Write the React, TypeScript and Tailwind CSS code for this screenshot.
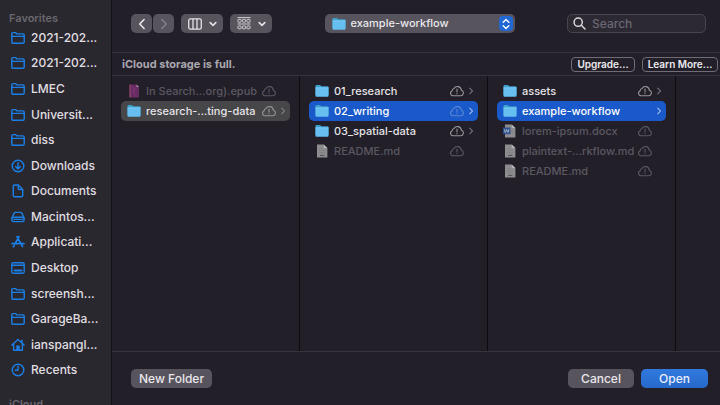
import type { ReactNode } from "react";

type IconName = "folder" | "download" | "document" | "disk" | "apps" | "desktop" | "home" | "clock";
type FileKind = "folder" | "epub" | "md" | "docx";
type Entry = { name: string; kind: FileKind; cloud?: boolean; state?: "active" | "path" };

const favorites: { label: string; icon: IconName }[] = [
  { label: "2021-202...", icon: "folder" },
  { label: "2021-202...", icon: "folder" },
  { label: "LMEC", icon: "folder" },
  { label: "Universit...", icon: "folder" },
  { label: "diss", icon: "folder" },
  { label: "Downloads", icon: "download" },
  { label: "Documents", icon: "document" },
  { label: "Macintos...", icon: "disk" },
  { label: "Applicati...", icon: "apps" },
  { label: "Desktop", icon: "desktop" },
  { label: "screensh...", icon: "folder" },
  { label: "GarageBa...", icon: "folder" },
  { label: "ianspangl...", icon: "home" },
  { label: "Recents", icon: "clock" },
];

const columns: Entry[][] = [
  [
    { name: "In Search...org).epub", kind: "epub", cloud: true },
    { name: "research-...ting-data", kind: "folder", cloud: true, state: "path" },
  ],
  [
    { name: "01_research", kind: "folder", cloud: true },
    { name: "02_writing", kind: "folder", cloud: true, state: "active" },
    { name: "03_spatial-data", kind: "folder", cloud: true },
    { name: "README.md", kind: "md", cloud: true },
  ],
  [
    { name: "assets", kind: "folder", cloud: true },
    { name: "example-workflow", kind: "folder", state: "active" },
    { name: "lorem-ipsum.docx", kind: "docx", cloud: true },
    { name: "plaintext-...rkflow.md", kind: "md", cloud: true },
    { name: "README.md", kind: "md", cloud: true },
  ],
];

const sidebarShapes: Record<IconName, ReactNode> = {
  folder: (
    <>
      <path d="M.8 11V2.9q0-1.3 1.3-1.3h2.5l1.3 1.3h6q1.3 0 1.3 1.3V11q0 1.3-1.3 1.3H2.1Q.8 12.3.8 11Z" />
      <path d="M.8 5.4h12.4" />
    </>
  ),
  download: (
    <>
      <circle cx="7" cy="7" r="5.8" />
      <path d="M7 3.8v6M4.6 7.6 7 10l2.4-2.4" />
    </>
  ),
  document: (
    <>
      <path d="M2.3 11.6V2.2q0-1.2 1.2-1.2h3.7l4.5 4.5v6.1q0 1.2-1.2 1.2h-7q-1.2 0-1.2-1.2Z" />
      <path d="M7.2 1.2v3.2q0 1.1 1.1 1.1h3.2" />
    </>
  ),
  disk: (
    <>
      <path d="M.9 8.3 3 3.4q.5-1 1.6-1h4.8q1.1 0 1.6 1l2.1 4.9" />
      <rect x=".9" y="7.2" width="12.2" height="4.4" rx="1.7" />
      <path d="M3 9.4h6M10.5 9.4h.8" />
    </>
  ),
  apps: (
    <g strokeWidth="1.7">
      <path d="m6 1.6 5.5 10M8 1.6 4.2 8.5M3.2 10.4l-.8 1.4M1 8.6h7.2M10.3 8.6H13" />
    </g>
  ),
  desktop: (
    <>
      <rect x=".8" y="1.8" width="12.4" height="10.4" rx="1.4" />
      <path d="M1 4.2h12" />
      <path d="M3.6 9.4h6.8" strokeWidth="2" />
    </>
  ),
  home: (
    <>
      <path d="M.9 7 7 1.5 13.1 7M2.6 6v6.2h8.8V6M11 2.2v2.4" />
      <path d="M5.3 7.5h3.4v4.7H5.3Z" fill="currentColor" stroke="none" />
    </>
  ),
  clock: (
    <>
      <circle cx="7" cy="7" r="5.8" />
      <path d="M7 3.3V7.3H4.2" />
    </>
  ),
};

function SidebarIcon({ name }: { name: IconName }) {
  return (
    <svg viewBox="0 0 14 14" className="size-3.5 shrink-0 text-[#1b7fe8]" fill="none" stroke="currentColor" strokeWidth="1.4" strokeLinecap="round" strokeLinejoin="round" aria-hidden="true">
      {sidebarShapes[name]}
    </svg>
  );
}

function FileIcon({ kind }: { kind: FileKind }) {
  if (kind === "folder") {
    return (
      <svg viewBox="0 0 14 14" className="size-3.5 shrink-0" aria-hidden="true">
        <path d="M.5 2q0-1 1-1h3.2q.6 0 1 .5l.6.7h6.2q1 0 1 1V11H.5Z" fill="#3d9fce" />
        <path d="M.5 3.6h13v8.2q0 .9-.9.9H1.4q-.9 0-.9-.9Z" fill="#66bff0" />
        <path d="M.5 3.6h13v.6H.5Z" fill="#8dd4f8" />
      </svg>
    );
  }
  if (kind === "epub") {
    return (
      <svg viewBox="0 0 14 14" className="size-3.5 shrink-0" aria-hidden="true">
        <path d="M2.5.5h7L12 3v10.5H2.5Z" fill="#672a62" />
        <path d="M2.5.5h1.3v13H2.5Z" fill="#8b4a66" />
        <path d="m5 2 2 3-1 4 3 3M9 3 7 7l3 3" stroke="#7f3c76" strokeWidth=".7" fill="none" />
        <path d="M9.5.5 12 3H9.5Z" fill="#a796a5" />
      </svg>
    );
  }
  return (
    <svg viewBox="0 0 14 14" className="size-3.5 shrink-0" aria-hidden="true">
      <path d="M2 .4h6.8L12.4 4v9.6H2Z" fill="#8d8c8e" />
      <path d="M8.8.4 12.4 4H8.8Z" fill="#b4b3b5" />
      <path d="M4 4.5h3.5M4 6.5h6.3M4 8.5h6.3" stroke="#7b7a7d" strokeWidth=".6" />
      {kind === "md" && <path d="M5 11.4h4.4" stroke="#59585c" strokeWidth="1.2" />}
      {kind === "docx" && (
        <>
          <path d="M0 3.5h7.4v6.7H0Z" fill="#2e518b" />
          <path d="m1.3 5.2 1 3.3 1.3-3 1.3 3 1-3.3" stroke="#a9b5cb" strokeWidth=".9" fill="none" />
        </>
      )}
    </svg>
  );
}

function CloudIcon({ tone }: { tone: string }) {
  return (
    <svg viewBox="0 0 14 12" className={`h-3 w-3.5 shrink-0 ${tone}`} fill="none" stroke="currentColor" strokeWidth="1.1" strokeLinecap="round" strokeLinejoin="round" aria-hidden="true">
      <path d="M3.3 10.7h7.3a2.8 2.8 0 0 0 .7-5.5A3.9 3.9 0 0 0 4 3.5 2.3 2.3 0 0 0 2.1 5.9 2.5 2.5 0 0 0 3.3 10.7Z" />
      <path d="M7 4v2.9M7 8.6v.1" />
    </svg>
  );
}

function Chevron({ tone, className = "h-2 w-1" }: { tone: string; className?: string }) {
  return (
    <svg viewBox="0 0 4 8" className={`shrink-0 ${className} ${tone}`} fill="none" stroke="currentColor" strokeLinecap="round" strokeLinejoin="round" aria-hidden="true">
      <path d="M.6 1 3.5 4 .6 7" />
    </svg>
  );
}

function DownChevron() {
  return (
    <svg viewBox="0 0 8 6" className="h-1.5 w-2" fill="none" stroke="#e4e2e6" strokeWidth="1.6" strokeLinecap="round" strokeLinejoin="round" aria-hidden="true">
      <path d="M1.2 1.6 4 4.3l2.8-2.7" />
    </svg>
  );
}

function FileRow({ entry }: { entry: Entry }) {
  const isFolder = entry.kind === "folder";
  const active = entry.state === "active";
  const background = active ? "bg-[#1a59c9]" : entry.state === "path" ? "bg-[#474648]" : "";
  const text = active ? "text-white" : isFolder ? "text-[#e6e4e8]" : "text-[#5b5861]";
  const cloud = active ? "text-[#5c87d2]" : isFolder ? "text-[#96949b]" : "text-[#5b5861]";
  return (
    <li>
      <button type="button" className={`flex h-5 w-full items-center gap-[5px] rounded-[5px] pr-[5px] pl-1.5 text-left text-[11px] ${background} ${text}`}>
        <FileIcon kind={entry.kind} />
        <span className="min-w-0 flex-1 whitespace-nowrap">{entry.name}</span>
        {entry.cloud && <CloudIcon tone={cloud} />}
        {isFolder ? <Chevron tone={active ? "text-[#dfe8f8]" : "text-[#9b99a0]"} /> : <span className="w-1" />}
      </button>
    </li>
  );
}

function Sidebar() {
  return (
    <nav aria-label="Sidebar" className="flex w-[112px] shrink-0 flex-col border-r border-[#131118] bg-[#2a282f]">
      <h2 className="flex h-[25px] shrink-0 items-end pl-[9px] text-[11px] leading-[14px] font-semibold text-[#69676e]">Favorites</h2>
      <ul className="flex min-h-0 flex-1 flex-col">
        {favorites.map((item, i) => (
          <li key={i} className="flex flex-1">
            <a href="#" className="flex flex-1 items-center gap-1.5 pl-[11px] text-[#e0dfe2]">
              <SidebarIcon name={item.icon} />
              <span className="whitespace-nowrap">{item.label}</span>
            </a>
          </li>
        ))}
      </ul>
      <h2 className="h-[22px] shrink-0 overflow-hidden pt-3.5 pl-[9px] text-[11px] leading-[14px] font-semibold text-[#69676e]">iCloud</h2>
    </nav>
  );
}

function Toolbar() {
  return (
    <header className="flex h-[53px] shrink-0 items-center justify-between border-b border-[#37343e] pr-3.5 pb-[5px] pl-[19px]">
      <div className="flex gap-[7px]">
        <div className="flex gap-px">
          <button type="button" aria-label="Back" className="flex h-[19px] w-[21px] items-center justify-center rounded-[5px] bg-[#57545d]">
            <Chevron tone="-scale-x-100 text-[#eceaee]" className="h-3 w-1.5" />
          </button>
          <button type="button" aria-label="Forward" className="flex h-[19px] w-[21px] items-center justify-center rounded-[5px] bg-[#57545d]">
            <Chevron tone="text-[#85828b]" className="h-3 w-1.5" />
          </button>
        </div>
        <button type="button" aria-label="View as columns" aria-haspopup="menu" className="flex h-[19px] w-[42px] items-center justify-center gap-[7px] rounded-[5px] bg-[#57545d]">
          <svg viewBox="0 0 14 12" className="h-3 w-3.5" fill="none" stroke="#e4e2e6" strokeWidth="1.3" aria-hidden="true">
            <rect x=".7" y=".9" width="12.6" height="10.2" rx="1.6" />
            <path d="M5 1v10M9 1v10" />
          </svg>
          <DownChevron />
        </button>
        <button type="button" aria-label="Group items" aria-haspopup="menu" className="flex h-[19px] w-[42px] items-center justify-center gap-[7px] rounded-[5px] bg-[#57545d]">
          <svg viewBox="0 0 14 13" className="h-[13px] w-3.5" fill="none" stroke="#d2d0d5" strokeWidth="1" aria-hidden="true">
            <path d="M.5.6h13M.5 7h13" />
            <rect x=".9" y="2.4" width="3.2" height="2.8" rx=".7" />
            <rect x="5.4" y="2.4" width="3.2" height="2.8" rx=".7" />
            <rect x="9.9" y="2.4" width="3.2" height="2.8" rx=".7" />
            <rect x=".9" y="9" width="3.2" height="2.8" rx=".7" />
            <rect x="5.4" y="9" width="3.2" height="2.8" rx=".7" />
            <rect x="9.9" y="9" width="3.2" height="2.8" rx=".7" />
          </svg>
          <DownChevron />
        </button>
      </div>
      <div className="relative h-[19px] w-[190px]">
        <select aria-label="Current folder" className="block h-full w-full appearance-none rounded-[5px] bg-[#57545d] pl-[26px] text-[11px] leading-[19px] font-medium text-[#e9e7eb]">
          <option>example-workflow</option>
        </select>
        <span className="pointer-events-none absolute inset-y-0 left-[7px] flex items-center">
          <FileIcon kind="folder" />
        </span>
        <span className="pointer-events-none absolute inset-y-0.5 right-0.5 flex w-3.5 items-center justify-center rounded bg-[#2268d2]">
          <svg viewBox="0 0 8 12" className="h-3 w-2" fill="none" stroke="#fff" strokeWidth="1.4" strokeLinecap="round" strokeLinejoin="round" aria-hidden="true">
            <path d="M1.2 4.2 4 1.6l2.8 2.6M1.2 7.8 4 10.4l2.8-2.6" />
          </svg>
        </span>
      </div>
      <label className="flex h-[19px] w-[139px] items-center gap-1.5 rounded-[5px] border border-[#47444d] bg-[#2c2933] pl-[5px]">
        <svg viewBox="0 0 13 13" className="size-[13px] shrink-0" fill="none" stroke="#d9d7dc" strokeWidth="1.5" strokeLinecap="round" aria-hidden="true">
          <circle cx="5.2" cy="5.2" r="4.1" />
          <path d="m8.3 8.3 3.7 3.7" />
        </svg>
        <input type="search" aria-label="Search" placeholder="Search" className="min-w-0 flex-1 bg-transparent text-[#e6e4e8] outline-none placeholder:text-[#6b6872]" />
      </label>
    </header>
  );
}

export default function App() {
  return (
    <div className="flex h-screen overflow-hidden bg-[#221f29] font-['Inter','Liberation_Sans',sans-serif] text-xs leading-4 font-medium">
      <Sidebar />
      <main className="flex min-w-0 flex-1 flex-col">
        <Toolbar />
        <section aria-label="iCloud status" className="flex h-[23px] shrink-0 items-center gap-[7px] border-b border-[#37343e] pr-0.5 pl-2.5">
          <p className="flex-1 text-[11px] font-bold text-[#aaa7af]">iCloud storage is full.</p>
          <button type="button" className="h-[15px] w-16 rounded border border-[#706d76] text-[10px] leading-[13px] font-semibold text-[#eceaee]">Upgrade...</button>
          <button type="button" className="h-[15px] w-[76px] rounded border border-[#706d76] text-[10px] leading-[13px] font-semibold text-[#eceaee]">Learn More...</button>
        </section>
        <div className="flex min-h-0 flex-1 overflow-hidden">
          {columns.map((entries, i) => (
            <ul key={i} className="w-[188px] shrink-0 border-r border-[#0e0c13] px-[9px] pt-[5px]">
              {entries.map((entry) => (
                <FileRow key={entry.name} entry={entry} />
              ))}
            </ul>
          ))}
        </div>
        <footer className="flex h-[54px] shrink-0 items-center gap-[7px] border-t border-[#37343e] pr-3 pl-[19px]">
          <button type="button" className="mr-auto h-[19px] w-[81px] rounded-[5px] bg-[#57545d] text-[#e9e7eb]">New Folder</button>
          <button type="button" className="h-[19px] w-[66px] rounded-[5px] bg-[#57545d] text-[#e9e7eb]">Cancel</button>
          <button type="button" className="h-[19px] w-[67px] rounded-[5px] bg-linear-to-b from-[#3079de] to-[#2769ca] text-[#e9eefa]">Open</button>
        </footer>
      </main>
    </div>
  );
}
